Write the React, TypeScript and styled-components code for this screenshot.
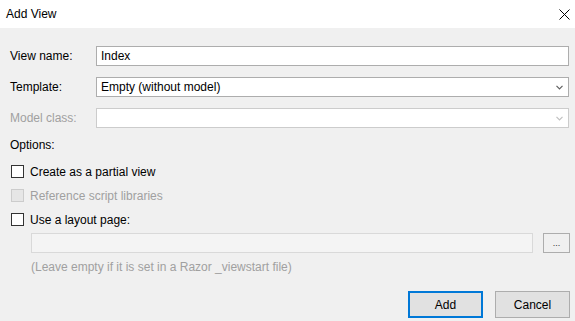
import { createGlobalStyle } from 'styled-components'
import styled from 'styled-components'

const GlobalStyle = createGlobalStyle`
  html, body {
    margin: 0;
    padding: 0;
    background: #f0f0f0;
  }
  body {
    font-family: "Liberation Sans", Arial, sans-serif;
    font-size: 12px;
    color: #000;
  }
`

const Window = styled.div`
  width: 575px;
  height: 321px;
  display: flex;
  flex-direction: column;
  background: #f0f0f0;
  box-sizing: border-box;
`

const TitleBar = styled.div`
  height: 28px;
  flex: none;
  background: #fff;
  display: flex;
  align-items: center;
  justify-content: space-between;
  padding: 0 3px 0 6px;
`

const Title = styled.span`
  font-size: 12px;
  line-height: 16px;
`

const CloseButton = styled.div`
  width: 16px;
  height: 16px;
  display: flex;
  align-items: center;
  justify-content: center;
`

const Body = styled.div`
  flex: 1;
  display: flex;
  flex-direction: column;
  padding: 18px 5px 3px 10px;
`

const FieldRow = styled.div`
  display: grid;
  grid-template-columns: 86px 1fr;
  align-items: center;
  height: 20px;
`

const Label = styled.span<{ $disabled?: boolean }>`
  color: ${p => (p.$disabled ? '#a0a0a0' : '#000')};
  line-height: 16px;
`

const TextBox = styled.div`
  height: 20px;
  box-sizing: border-box;
  border: 1px solid #adadad;
  background: #fff;
  padding: 0 4px;
  display: flex;
  align-items: center;
  margin-right: 1px;
`

const ComboBox = styled(TextBox)<{ $disabled?: boolean }>`
  justify-content: space-between;
  border-color: ${p => (p.$disabled ? '#cccccc' : '#adadad')};
  padding-right: 5px;
`

const Fields = styled.div`
  display: flex;
  flex-direction: column;
  gap: 11px;
`

const OptionsLabel = styled.div`
  line-height: 16px;
  margin-top: 9px;
`

const CheckList = styled.div`
  display: flex;
  flex-direction: column;
  gap: 11px;
  margin-top: 12px;
  padding-left: 1px;
`

const CheckRow = styled.label<{ $disabled?: boolean }>`
  display: flex;
  align-items: center;
  height: 13px;
  gap: 6px;
  color: ${p => (p.$disabled ? '#a0a0a0' : '#000')};
`

const Box = styled.span<{ $disabled?: boolean }>`
  width: 13px;
  height: 13px;
  box-sizing: border-box;
  border: 1px solid ${p => (p.$disabled ? '#cccccc' : '#333333')};
  background: ${p => (p.$disabled ? '#e6e6e6' : '#fff')};
  flex: none;
`

const PathRow = styled.div`
  display: flex;
  align-items: center;
  gap: 10px;
  margin-top: 7px;
  padding-left: 21px;
`

const PathBox = styled.div`
  flex: 1;
  height: 20px;
  box-sizing: border-box;
  border: 1px solid #d9d9d9;
  background: #f4f4f4;
`

const BrowseButton = styled.div`
  width: 27px;
  height: 20px;
  box-sizing: border-box;
  border: 1px solid #adadad;
  background: #f0f0f0;
  display: flex;
  align-items: flex-end;
  justify-content: center;
  padding-bottom: 4px;
  font-size: 9px;
  line-height: 9px;
  color: #333;
`

const Hint = styled.div`
  margin-top: 6px;
  padding-left: 21px;
  line-height: 16px;
  color: #a0a0a0;
`

const Footer = styled.div`
  margin-top: auto;
  display: flex;
  justify-content: flex-end;
  gap: 12px;
`

const Button = styled.div<{ $primary?: boolean }>`
  width: 75px;
  height: 27px;
  box-sizing: border-box;
  border: ${p => (p.$primary ? '2px solid #0078d7' : '1px solid #adadad')};
  background: #e1e1e1;
  display: flex;
  align-items: center;
  justify-content: center;
  font-size: 12px;
`

const Chevron = ({ color }: { color: string }) => (
  <svg width="7" height="5" viewBox="0 0 7 5">
    <path d="M0.5 0.8 L3.5 3.8 L6.5 0.8" fill="none" stroke={color} strokeWidth="1.2" />
  </svg>
)

export default function App() {
  return (
    <>
      <GlobalStyle />
      <Window>
        <TitleBar>
          <Title>Add View</Title>
          <CloseButton>
            <svg width="11" height="11" viewBox="0 0 11 11">
              <path d="M0.5 0.5 L10.5 10.5 M10.5 0.5 L0.5 10.5" stroke="#000" strokeWidth="1" />
            </svg>
          </CloseButton>
        </TitleBar>
        <Body>
          <Fields>
            <FieldRow>
              <Label>View name:</Label>
              <TextBox>Index</TextBox>
            </FieldRow>
            <FieldRow>
              <Label>Template:</Label>
              <ComboBox>
                <span>Empty (without model)</span>
                <Chevron color="#606060" />
              </ComboBox>
            </FieldRow>
            <FieldRow>
              <Label $disabled>Model class:</Label>
              <ComboBox $disabled>
                <span />
                <Chevron color="#c0c0c0" />
              </ComboBox>
            </FieldRow>
          </Fields>
          <OptionsLabel>Options:</OptionsLabel>
          <CheckList>
            <CheckRow>
              <Box />
              Create as a partial view
            </CheckRow>
            <CheckRow $disabled>
              <Box $disabled />
              Reference script libraries
            </CheckRow>
            <CheckRow>
              <Box />
              Use a layout page:
            </CheckRow>
          </CheckList>
          <PathRow>
            <PathBox />
            <BrowseButton>...</BrowseButton>
          </PathRow>
          <Hint>(Leave empty if it is set in a Razor _viewstart file)</Hint>
          <Footer>
            <Button $primary>Add</Button>
            <Button>Cancel</Button>
          </Footer>
        </Body>
      </Window>
    </>
  )
}
